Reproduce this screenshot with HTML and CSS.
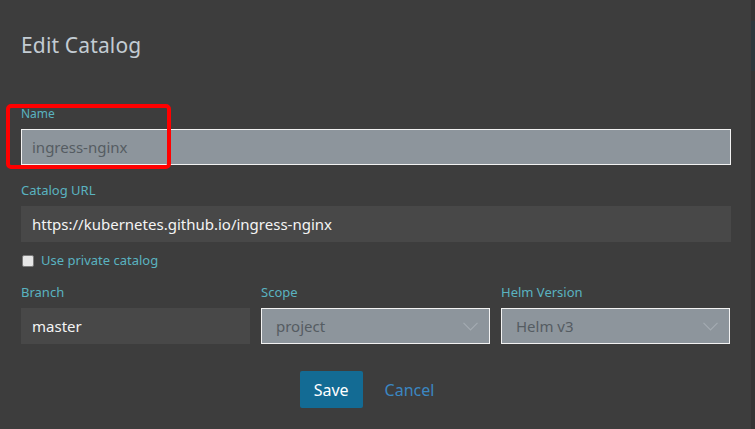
FILE: index.html
```html
<!DOCTYPE html>
<html lang="en">
<head>
<meta charset="utf-8">
<title>Edit Catalog</title>
<link rel="stylesheet" href="styles.css">
</head>
<body>
<div class="page">
  <main class="modal">
    <h1 class="title">Edit Catalog</h1>

    <div class="field name-field">
      <label class="label label-sm">Name</label>
      <div class="input input-disabled">ingress-nginx</div>
      <span class="highlight"></span>
    </div>

    <div class="field url-field">
      <label class="label">Catalog URL</label>
      <div class="input input-dark">https://kubernetes.github.io/ingress-nginx</div>
    </div>

    <div class="check-row">
      <span class="checkbox"></span>
      <span class="check-label">Use private catalog</span>
    </div>

    <div class="grid3">
      <div class="field">
        <label class="label">Branch</label>
        <div class="input input-dark">master</div>
      </div>
      <div class="field">
        <label class="label">Scope</label>
        <div class="input input-disabled select">
          <span>project</span>
          <svg class="chev" width="15" height="9" viewBox="0 0 15 9"><path d="M0.5 0.8 L7.5 7.8 L14.5 0.8" fill="none" stroke="#a3abb1" stroke-width="1.2"/></svg>
        </div>
      </div>
      <div class="field">
        <label class="label">Helm Version</label>
        <div class="input input-disabled select">
          <span>Helm v3</span>
          <svg class="chev" width="15" height="9" viewBox="0 0 15 9"><path d="M0.5 0.8 L7.5 7.8 L14.5 0.8" fill="none" stroke="#a3abb1" stroke-width="1.2"/></svg>
        </div>
      </div>
    </div>

    <div class="actions">
      <button class="btn btn-primary">Save</button>
      <button class="btn btn-link">Cancel</button>
    </div>
  </main>
  <aside class="edge"><span class="edge-mark"></span></aside>
</div>
</body>
</html>
```

FILE: styles.css
```css
* { box-sizing: border-box; }
html, body {
  margin: 0;
  padding: 0;
  height: 100%;
  background: #3d3d3d;
  font-family: "Noto Sans", "Open Sans", sans-serif;
  overflow: hidden;
}
.page {
  display: flex;
  height: 429px;
}
.modal {
  flex: 1;
  padding: 31px 20px 0 21px;
  display: flex;
  flex-direction: column;
}
.edge {
  width: 4px;
  background: #353535;
  padding-top: 21px;
}
.edge-mark {
  display: block;
  height: 50px;
  background: #2e383d;
}
.title {
  margin: 0;
  font-size: 21px;
  line-height: 28px;
  font-weight: 400;
  color: #c3ccd3;
  letter-spacing: 0.15px;
}
.field {
  display: flex;
  flex-direction: column;
}
.name-field {
  position: relative;
  margin-top: 47px;
}
.url-field { margin-top: 16px; }
.label {
  font-size: 13px;
  line-height: 18px;
  color: #5ab3c0;
  margin-bottom: 7px;
}
.label-sm {
  font-size: 12px;
  line-height: 16px;
  margin-bottom: 7px;
}
.input {
  height: 36px;
  padding: 0 10px;
  display: flex;
  align-items: center;
  font-size: 15px;
}
.input-disabled {
  background: #8d959c;
  border: 1px solid #f2f2f2;
  color: #555c62;
}
.input-dark {
  background: #484848;
  color: #f4f4f4;
  padding-left: 11px;
}
.select {
  justify-content: space-between;
  padding-left: 14px;
  padding-right: 11px;
}
.chev { display: block; margin-top: 1px; }
.highlight {
  position: absolute;
  left: -15px;
  top: -2px;
  width: 165px;
  height: 65px;
  border: 4px solid #ff0000;
  border-radius: 5px;
}
.check-row {
  margin-top: 13px;
  display: flex;
  align-items: center;
  height: 12px;
  padding-left: 1px;
}
.checkbox {
  width: 12px;
  height: 12px;
  background: #e6e6e6;
  border: 1px solid #7a7a7a;
  border-radius: 2px;
}
.check-label {
  margin-left: 7px;
  font-size: 13px;
  color: #5ab3c0;
  line-height: 18px;
  margin-top: -2px;
}
.grid3 {
  margin-top: 16px;
  display: grid;
  grid-template-columns: repeat(3, 229px);
  column-gap: 11px;
}
.actions {
  margin-top: 27px;
  display: flex;
  justify-content: center;
  gap: 10px;
  padding-right: 6px;
}
.btn {
  font-family: inherit;
  font-size: 16px;
  height: 37px;
  border: none;
  border-radius: 2px;
  cursor: pointer;
}
.btn-primary {
  width: 63px;
  background: #136b94;
  color: #ffffff;
}
.btn-link {
  background: transparent;
  color: #3b87c2;
  padding: 0 12px;
}
```
